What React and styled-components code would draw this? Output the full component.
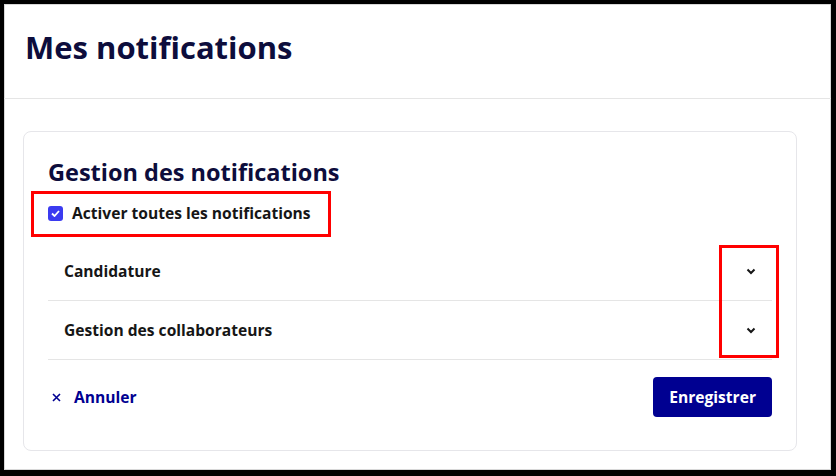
import React from 'react'
import styled, { createGlobalStyle } from 'styled-components'

const GlobalStyle = createGlobalStyle`
  html, body { margin: 0; padding: 0; background: #fff; }
  body { font-family: "Open Sans", "Noto Sans", sans-serif; }
  * { box-sizing: border-box; }
`

const Frame = styled.div`
  width: 836px;
  height: 476px;
  border-top: 4px solid #000;
  border-left: 4px solid #000;
  border-right: 5px solid #000;
  border-bottom: 6px solid #000;
  background: #fff;
  position: relative;
  display: flex;
  flex-direction: column;
  box-shadow: inset 1px 1px 0 #d8d8d8, inset -1px -1px 0 #d8d8d8;
`

const Header = styled.div`
  height: 95px;
  padding: 21px 21px 0;
  border-bottom: 1px solid #e5e5e5;
`

const PageTitle = styled.h1`
  margin: 0;
  font-size: 31px;
  line-height: 44px;
  font-weight: 700;
  color: #0d0d3c;
`

const Body = styled.div`
  padding: 32px 34px 0 19px;
`

const Card = styled.div`
  position: relative;
  border: 1px solid #e6e6ea;
  border-radius: 8px;
  padding: 24px 24px 33px;
`

const SectionTitle = styled.h2`
  margin: 0;
  font-size: 23.5px;
  line-height: 32px;
  font-weight: 700;
  color: #0d0d3c;
`

const CheckRow = styled.label`
  display: flex;
  align-items: center;
  gap: 9px;
  margin-top: 13px;
  font-size: 15.6px;
  font-weight: 700;
  color: #161616;
  height: 24px;
`

const Box = styled.span`
  width: 15px;
  height: 15px;
  border-radius: 3px;
  background: #3b3bf0;
  display: flex;
  align-items: center;
  justify-content: center;
`

const List = styled.div`
  margin-top: 17px;
`

const Row = styled.div`
  display: flex;
  align-items: center;
  justify-content: space-between;
  height: 59px;
  padding: 0 16px;
  border-bottom: 1px solid #e5e5e5;
  font-size: 15.6px;
  font-weight: 700;
  color: #161616;
`

const Footer = styled.div`
  display: flex;
  align-items: center;
  justify-content: space-between;
  margin-top: 17px;
`

const CancelLink = styled.a`
  display: flex;
  align-items: center;
  gap: 13px;
  padding-left: 4px;
  font-size: 15.6px;
  font-weight: 700;
  color: #000091;
`

const SaveButton = styled.button`
  height: 40px;
  padding: 0 16px;
  border: none;
  border-radius: 4px;
  background: #000091;
  color: #fff;
  font-family: inherit;
  font-size: 15.6px;
  font-weight: 700;
`

const Highlight = styled.div`
  position: absolute;
  border: 3px solid #ff0000;
  pointer-events: none;
`

const Chevron = () => (
  <svg width="10" height="7" viewBox="0 0 10 7">
    <path d="M1.5 1.5 L5 5 L8.5 1.5" fill="none" stroke="#161616" strokeWidth="2" />
  </svg>
)

const sections = ['Candidature', 'Gestion des collaborateurs']

export default function App() {
  return (
    <Frame>
      <GlobalStyle />
      <Header>
        <PageTitle>Mes notifications</PageTitle>
      </Header>
      <Body>
        <Card>
          <SectionTitle>Gestion des notifications</SectionTitle>
          <CheckRow>
            <Box>
              <svg width="9" height="7" viewBox="0 0 9 7">
                <path d="M1 3.5 L3.5 6 L8 1" fill="none" stroke="#fff" strokeWidth="1.8" />
              </svg>
            </Box>
            Activer toutes les notifications
          </CheckRow>
          <List>
            {sections.map(s => (
              <Row key={s}>
                {s}
                <Chevron />
              </Row>
            ))}
          </List>
          <Footer>
            <CancelLink>
              <svg width="9" height="9" viewBox="0 0 9 9">
                <path d="M1 1 L8 8 M8 1 L1 8" stroke="#000091" strokeWidth="1.6" />
              </svg>
              Annuler
            </CancelLink>
            <SaveButton>Enregistrer</SaveButton>
          </Footer>
        </Card>
      </Body>
      <Highlight style={{ left: 27, top: 187, width: 300, height: 46 }} />
      <Highlight style={{ left: 715, top: 241, width: 60, height: 113 }} />
    </Frame>
  )
}
